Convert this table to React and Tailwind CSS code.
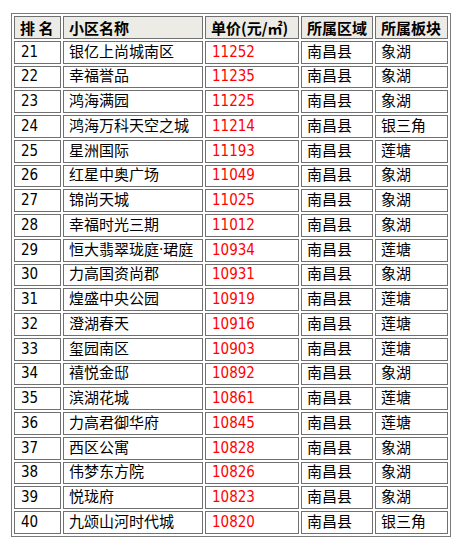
import React from "react";

const rows = [
  ["21", "银亿上尚城南区", "11252", "南昌县", "象湖"],
  ["22", "幸福誉品", "11235", "南昌县", "象湖"],
  ["23", "鸿海满园", "11225", "南昌县", "象湖"],
  ["24", "鸿海万科天空之城", "11214", "南昌县", "银三角"],
  ["25", "星洲国际", "11193", "南昌县", "莲塘"],
  ["26", "红星中奥广场", "11049", "南昌县", "象湖"],
  ["27", "锦尚天城", "11025", "南昌县", "象湖"],
  ["28", "幸福时光三期", "11012", "南昌县", "象湖"],
  ["29", "恒大翡翠珑庭·珺庭", "10934", "南昌县", "莲塘"],
  ["30", "力高国资尚郡", "10931", "南昌县", "象湖"],
  ["31", "煌盛中央公园", "10919", "南昌县", "莲塘"],
  ["32", "澄湖春天", "10916", "南昌县", "莲塘"],
  ["33", "玺园南区", "10903", "南昌县", "莲塘"],
  ["34", "禧悦金邸", "10892", "南昌县", "象湖"],
  ["35", "滨湖花城", "10861", "南昌县", "莲塘"],
  ["36", "力高君御华府", "10845", "南昌县", "莲塘"],
  ["37", "西区公寓", "10828", "南昌县", "象湖"],
  ["38", "伟梦东方院", "10826", "南昌县", "象湖"],
  ["39", "悦珑府", "10823", "南昌县", "象湖"],
  ["40", "九颂山河时代城", "10820", "南昌县", "银三角"],
];

const font = {
  fontFamily: '"DejaVu Sans Condensed", "Noto Sans CJK SC", sans-serif',
};

export default function App() {
  return (
    <div className="bg-white w-[457px] h-[545px] pt-[13px] pl-[11px]">
      <table
        className="table-fixed border-separate border-spacing-[2px] border border-[#7a7a7a] w-[440px] text-[15px] text-black"
        style={font}
      >
        <thead>
          <tr>
            <th className="w-[47px] h-[22.76px] border border-[#707070] bg-[#ecebe5] text-left pl-[5px] font-bold leading-none p-0 [font-family:'Noto_Sans_CJK_SC',sans-serif]">
              排 名
            </th>
            <th className="w-[140px] h-[22.76px] border border-[#707070] bg-[#ecebe5] text-left pl-[5px] font-bold leading-none p-0 [font-family:'Noto_Sans_CJK_SC',sans-serif]">
              小区名称
            </th>
            <th className="w-[94px] h-[22.76px] border border-[#707070] bg-[#ecebe5] text-left pl-[5px] font-bold leading-none p-0 [font-family:'Noto_Sans_CJK_SC',sans-serif]">
              单价(元/㎡)
            </th>
            <th className="w-[72px] h-[22.76px] border border-[#707070] bg-[#ecebe5] text-left pl-[5px] font-bold leading-none p-0 [font-family:'Noto_Sans_CJK_SC',sans-serif]">
              所属区域
            </th>
            <th className="w-[73px] h-[22.76px] border border-[#707070] bg-[#ecebe5] text-left pl-[5px] font-bold leading-none p-0 [font-family:'Noto_Sans_CJK_SC',sans-serif]">
              所属板块
            </th>
          </tr>
        </thead>
        <tbody>
          {rows.map((r) => (
            <tr key={r[0]}>
              <td className="h-[22.76px] border border-[#707070] pl-[6px] p-0 leading-none">{r[0]}</td>
              <td className="h-[22.76px] border border-[#707070] pl-[5px] p-0 leading-none whitespace-nowrap">{r[1]}</td>
              <td className="h-[22.76px] border border-[#707070] pl-[6px] p-0 leading-none text-[#ff0000]">{r[2]}</td>
              <td className="h-[22.76px] border border-[#707070] pl-[5px] p-0 leading-none">{r[3]}</td>
              <td className="h-[22.76px] border border-[#707070] pl-[5px] p-0 leading-none">{r[4]}</td>
            </tr>
          ))}
        </tbody>
      </table>
    </div>
  );
}
